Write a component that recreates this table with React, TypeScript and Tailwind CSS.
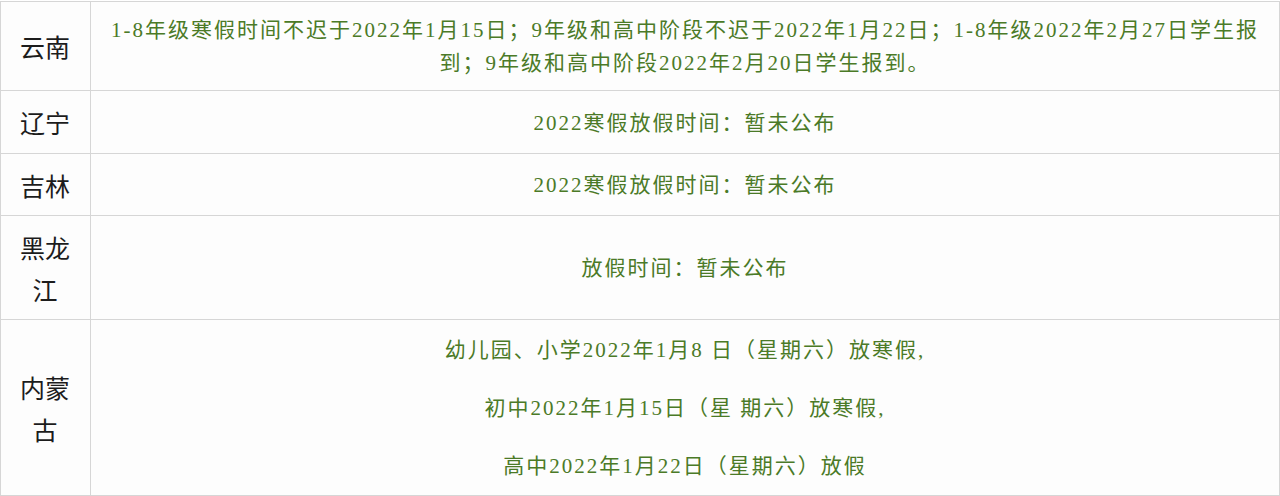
const cjk = '"Liberation Serif", "Noto Sans CJK SC", serif'

type Row = {
  province: string[]
  lines: string[]
  height: string
  gap?: boolean
}

const rows: Row[] = [
  {
    province: ['云南'],
    lines: [
      '1-8年级寒假时间不迟于2022年1月15日；9年级和高中阶段不迟于2022年1月22日；1-8年级2022年2月27日学生报',
      '到；9年级和高中阶段2022年2月20日学生报到。',
    ],
    height: 'h-[89px]',
  },
  { province: ['辽宁'], lines: ['2022寒假放假时间：暂未公布'], height: 'h-[63px]' },
  { province: ['吉林'], lines: ['2022寒假放假时间：暂未公布'], height: 'h-[62px]' },
  { province: ['黑龙', '江'], lines: ['放假时间：暂未公布'], height: 'h-[104px]' },
  {
    province: ['内蒙', '古'],
    lines: [
      '幼儿园、小学2022年1月8 日（星期六）放寒假,',
      '初中2022年1月15日（星 期六）放寒假,',
      '高中2022年1月22日（星期六）放假',
    ],
    height: 'h-[176px]',
    gap: true,
  },
]

export default function App() {
  return (
    <div className="w-[1280px] h-[496px] bg-white overflow-hidden">
      <div className="w-[1280px] mt-[1px] border-t border-l border-r border-[#d6d6d6] bg-[#fdfdfd]">
        {rows.map((r, i) => (
          <div key={i} className={`flex border-b border-[#d6d6d6] ${r.height}`}>
            {/* province */}
            <div
              className="w-[90px] shrink-0 border-r border-[#d6d6d6] flex flex-col items-center justify-center pr-[1px] text-[25px] leading-[42px] text-[#1c1c1c]"
              style={{ fontFamily: '"Noto Sans CJK SC", sans-serif' }}
            >
              {r.province.map((p, j) => (
                <span key={j}>{p}</span>
              ))}
            </div>
            {/* detail */}
            <div
              className={`flex-1 flex flex-col items-center justify-center pt-[2px] text-[21px] leading-[33px] tracking-[2px] text-[#4b7a27] ${r.gap ? 'gap-[25px]' : ''}`}
              style={{ fontFamily: cjk }}
            >
              {r.lines.map((l, j) => (
                <p key={j} className="whitespace-nowrap">
                  {l}
                </p>
              ))}
            </div>
          </div>
        ))}
      </div>
    </div>
  )
}
